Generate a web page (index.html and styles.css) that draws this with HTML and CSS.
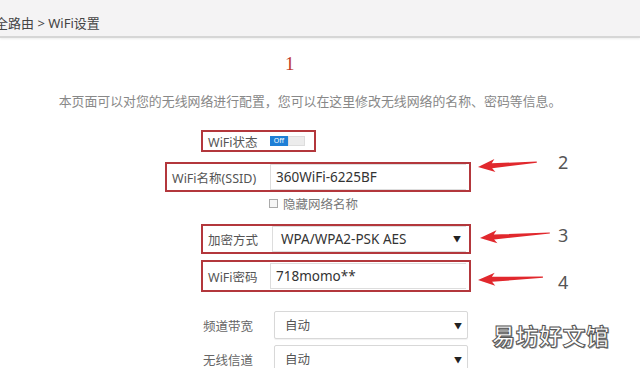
FILE: index.html
```html
<!DOCTYPE html>
<html lang="zh-CN">
<head>
    <meta charset="UTF-8">
    <meta name="viewport" content="width=device-width, initial-scale=1.0">
    <title>WiFi设置</title>
    <link rel="stylesheet" href="styles.css">
</head>
<body>
    <div class="topbar"><span class="crumb">全路由 &gt; WiFi设置</span></div>
    <div class="page">
        <div class="step-one">1</div>
        <p class="intro">本页面可以对您的无线网络进行配置，您可以在这里修改无线网络的名称、密码等信息。</p>

        <div class="form">
            <div class="row row-status">
                <div class="mark mark-status">
                    <span class="label label-short">WiFi状态</span>
                    <span class="toggle"><span class="toggle-on">Off</span><span class="toggle-off"></span></span>
                </div>
            </div>
            <div class="row row-ssid">
                <div class="mark mark-ssid">
                    <span class="label label-long">WiFi名称(SSID)</span>
                    <div class="field">360WiFi-6225BF</div>
                </div>
            </div>
            <div class="row row-check">
                <span class="checkbox"></span>
                <span class="check-text">隐藏网络名称</span>
            </div>
            <div class="row row-enc">
                <div class="mark mark-wide">
                    <span class="label label-short">加密方式</span>
                    <div class="field select">WPA/WPA2-PSK AES<span class="caret">▼</span></div>
                </div>
            </div>
            <div class="row row-pwd">
                <div class="mark mark-wide mark-tall">
                    <span class="label label-short">WiFi密码</span>
                    <div class="field">718momo**</div>
                </div>
            </div>
            <div class="row row-plain row-band">
                <span class="label label-plain">频道带宽</span>
                <div class="field select plain">自动<span class="caret">▼</span></div>
            </div>
            <div class="row row-plain row-chan">
                <span class="label label-plain">无线信道</span>
                <div class="field select plain">自动<span class="caret">▼</span></div>
            </div>
        </div>
    </div>

    <!-- annotations drawn over the screenshot -->
    <svg class="notes" width="640" height="368" viewBox="0 0 640 368">
        <g fill="#e1282d">
            <polygon transform="translate(478 167) rotate(-4.8)" points="0,0 17,-6.5 14,-2.5 59,-0.6 59,0.6 14,2.5 17,6.5"/>
            <polygon transform="translate(480 238) rotate(-4.1)" points="0,0 17,-6.5 14,-2.5 70,-0.6 70,0.6 14,2.5 17,6.5"/>
            <polygon transform="translate(478 280) rotate(-2.6)" points="0,0 17,-6.5 14,-2.5 65,-0.6 65,0.6 14,2.5 17,6.5"/>
        </g>
        <g class="note-num">
            <text x="558" y="169">2</text>
            <text x="558" y="242">3</text>
            <text x="558" y="289">4</text>
        </g>
    </svg>
    <div class="watermark">易坊好文馆</div>
</body>
</html>
```

FILE: styles.css
```css
body {
    margin: 0;
    font-family: "Noto Sans", "Noto Sans CJK SC", sans-serif;
    color: #555;
    background: #fff;
    overflow: hidden;
}
.topbar {
    height: 38px;
    box-sizing: border-box;
    padding-top: 8px;
    background: #f4f3f4;
    border-bottom: 2px solid #d6d6d6;
    box-shadow: 0 1px 2px rgba(0, 0, 0, 0.08);
    display: flex;
    align-items: center;
}
.crumb {
    margin-left: -5px;
    font-size: 13px;
    color: #444;
}
.step-one {
    margin-top: 17px;
    padding-left: 285px;
    font-family: "Liberation Serif", serif;
    font-size: 19px;
    line-height: 18px;
    color: #c0392b;
}
.intro {
    margin: 20px 0 0;
    padding-right: 20px;
    text-align: center;
    font-size: 12.9px;
    line-height: 16px;
    color: #888;
}
.form {
    margin-top: 21px;
}
.row {
    display: flex;
    align-items: center;
}
.mark {
    display: flex;
    align-items: center;
    box-sizing: border-box;
    border: 2px solid #b3373c;
    padding: 0 3px 0 5px;
}
.mark-status {
    margin-left: 201px;
    width: 115px;
    height: 22px;
}
.mark-ssid {
    margin-left: 165px;
    width: 306px;
    height: 30px;
}
.mark-wide {
    margin-left: 201px;
    width: 270px;
    height: 30px;
}
.mark-tall {
    height: 32px;
}
.row-ssid {
    margin-top: 10px;
}
.row-check {
    margin-top: 3px;
    height: 16px;
    padding-left: 269px;
}
.row-enc {
    margin-top: 13px;
}
.row-pwd {
    margin-top: 6px;
}
.row-band {
    margin-top: 19px;
}
.row-chan {
    margin-top: 6px;
}
.label {
    font-size: 12.5px;
    color: #555;
    white-space: nowrap;
}
.label-short {
    width: 62px;
}
.label-long {
    width: 98px;
}
.row-plain {
    padding-left: 203px;
}
.label-plain {
    width: 69px;
    color: #666;
}
.toggle {
    display: flex;
    height: 10px;
}
.toggle-on {
    width: 18px;
    background: #1e7fd6;
    color: #fff;
    font-size: 7px;
    line-height: 10px;
    text-align: center;
}
.toggle-off {
    width: 17px;
    background: #ececec;
    border: 1px solid #ddd;
    box-sizing: border-box;
}
.field {
    flex: 1;
    box-sizing: border-box;
    height: 26px;
    border: 1px solid #ddd;
    border-right: 0;
    background: #fff;
    padding-left: 5px;
    font-size: 13.5px;
    line-height: 24px;
    color: #333;
    position: relative;
}
.select {
    padding-left: 8px;
    margin-left: 2px;
}
.plain {
    flex: none;
    width: 194px;
    height: 28px;
    line-height: 28px;
    border: 1px solid #d8d8d8;
    border-radius: 2px;
    box-shadow: 0 1px 1px rgba(0, 0, 0, 0.06);
    padding-left: 10px;
    font-size: 12.5px;
    color: #555;
}
.caret {
    position: absolute;
    right: 5px;
    top: 0;
    font-size: 8px;
    color: #222;
}
.checkbox {
    width: 7px;
    height: 7px;
    border: 1px solid #aaa;
    background: #f6f6f6;
}
.check-text {
    margin-left: 5px;
    font-size: 12.5px;
    color: #777;
}
.notes {
    position: absolute;
    left: 0;
    top: 0;
    pointer-events: none;
}
.note-num {
    font-family: "Noto Sans", sans-serif;
    font-size: 18px;
    fill: #555;
}
.watermark {
    position: absolute;
    left: 492px;
    top: 318px;
    font-family: "Noto Sans CJK SC", sans-serif;
    font-size: 23px;
    font-weight: bold;
    letter-spacing: 0.5px;
    color: #fff;
    -webkit-text-stroke: 1px #555;
    text-shadow: 1px 1px 0 #999;
}
```
